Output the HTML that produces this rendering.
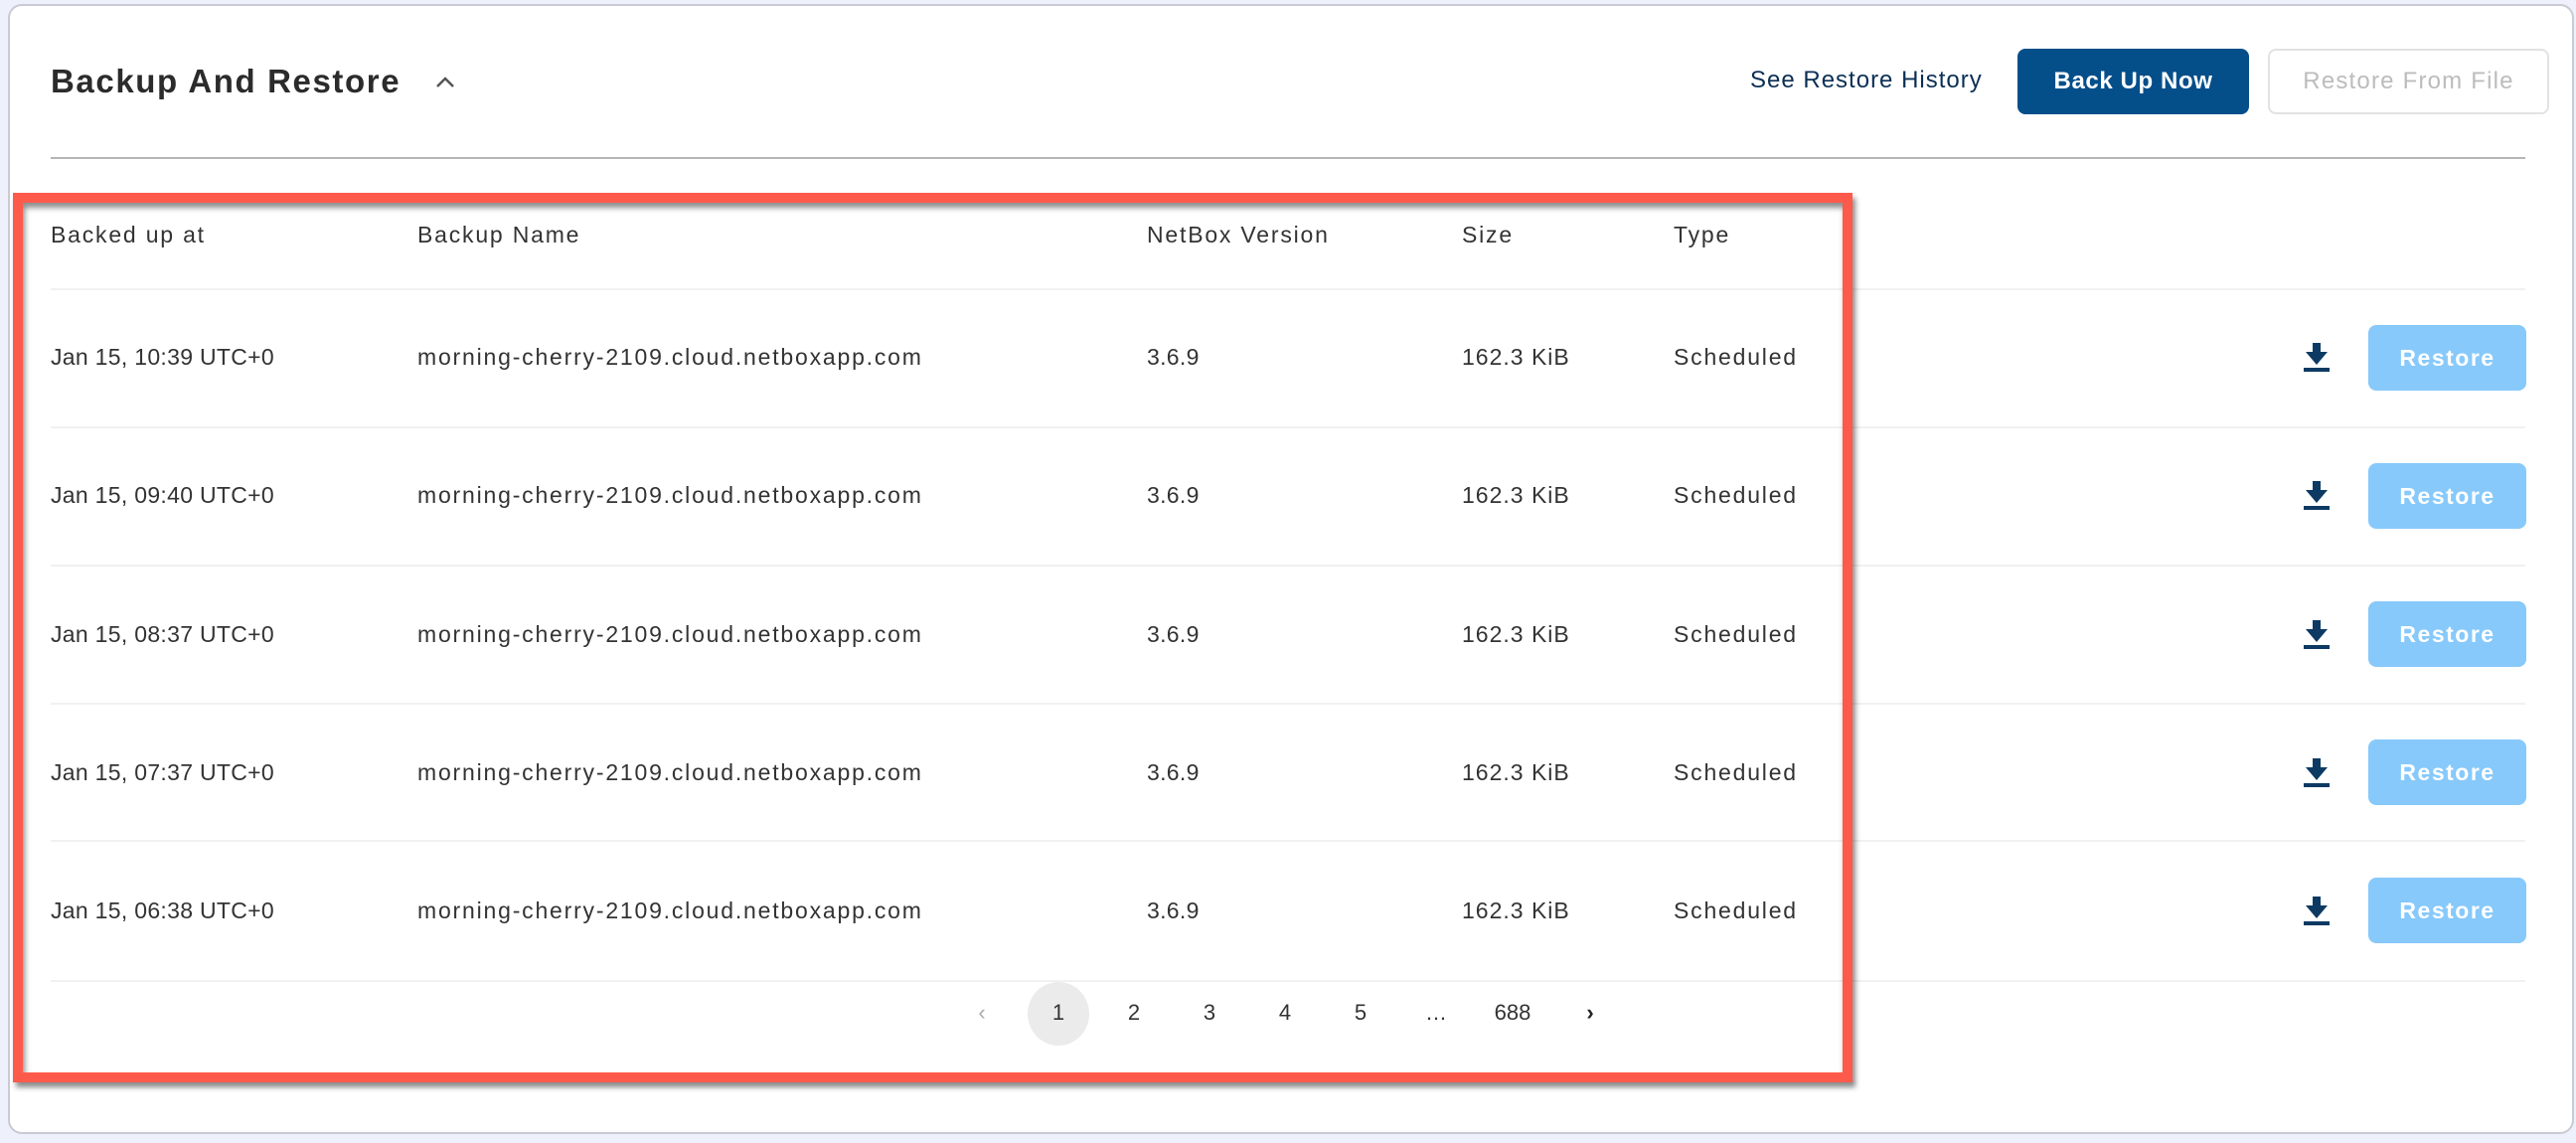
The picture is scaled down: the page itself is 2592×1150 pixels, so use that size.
<!DOCTYPE html>
<html><head><meta charset="utf-8"><style>
*{margin:0;padding:0;box-sizing:border-box}
body{width:2592px;height:1150px;background:#eef1fc;font-family:"Liberation Sans",sans-serif;color:#333;position:relative;overflow:hidden}
.card{position:absolute;left:8px;top:4px;width:2582px;height:1137px;background:#fff;border:2px solid #c9cad3;border-radius:14px}
.a{position:absolute;white-space:nowrap}
.t{font-size:23px;color:#333;line-height:28px;letter-spacing:1.8px}
.d{letter-spacing:0.3px}
.line{position:absolute;left:51px;width:2490px;height:2px;background:#f1f1f1}
.rb{position:absolute;left:2383px;width:159px;height:66px;background:#87c9fb;border-radius:8px;color:#fff;font-size:23px;text-align:center;line-height:66px;letter-spacing:1.5px;font-weight:bold}
.dl{position:absolute;left:2318px;width:26px;height:30px}
.pg{position:absolute;top:1006px;font-size:22px;color:#333;width:60px;text-align:center;line-height:26px}
</style></head><body>
<div class="card"></div>
<div class="a" style="left:51px;top:62px;font-size:33px;font-weight:bold;color:#2b2b2b;letter-spacing:1.6px;line-height:40px">Backup And Restore</div>
<svg class="a" style="left:437px;top:74px" width="22" height="16" viewBox="0 0 22 16"><path d="M3 13 L11 5 L19 13" fill="none" stroke="#555" stroke-width="2.5"/></svg>
<div class="a" style="left:1761px;top:66px;font-size:24px;color:#0b2f55;line-height:30px;letter-spacing:1px">See Restore History</div>
<div class="a" style="left:2030px;top:49px;width:233px;height:66px;background:#044e8a;border-radius:8px;color:#fff;font-size:24px;font-weight:bold;text-align:center;line-height:66px;letter-spacing:0.6px">Back Up Now</div>
<div class="a" style="left:2282px;top:49px;width:283px;height:66px;border:2px solid #e2e2e2;border-radius:8px;color:#bcbcbc;font-size:24px;text-align:center;line-height:62px;letter-spacing:1.2px">Restore From File</div>
<div class="a" style="left:51px;top:158px;width:2490px;height:2px;background:#b5b5b5"></div>

<div class="a t" style="left:51px;top:222px">Backed up at</div>
<div class="a t" style="left:420px;top:222px">Backup Name</div>
<div class="a t" style="left:1154px;top:222px">NetBox Version</div>
<div class="a t" style="left:1471px;top:222px">Size</div>
<div class="a t" style="left:1684px;top:222px">Type</div>

<div class="line" style="top:290px"></div>
<div class="line" style="top:429px"></div>
<div class="line" style="top:568px"></div>
<div class="line" style="top:707px"></div>
<div class="line" style="top:845px"></div>
<div class="line" style="top:986px"></div>

<div class="a t d" style="left:51px;top:345px">Jan 15, 10:39 UTC+0</div>
<div class="a t d" style="left:51px;top:484px">Jan 15, 09:40 UTC+0</div>
<div class="a t d" style="left:51px;top:624px">Jan 15, 08:37 UTC+0</div>
<div class="a t d" style="left:51px;top:763px">Jan 15, 07:37 UTC+0</div>
<div class="a t d" style="left:51px;top:902px">Jan 15, 06:38 UTC+0</div>

<div class="a t" style="left:420px;top:345px">morning-cherry-2109.cloud.netboxapp.com</div>
<div class="a t" style="left:420px;top:484px">morning-cherry-2109.cloud.netboxapp.com</div>
<div class="a t" style="left:420px;top:624px">morning-cherry-2109.cloud.netboxapp.com</div>
<div class="a t" style="left:420px;top:763px">morning-cherry-2109.cloud.netboxapp.com</div>
<div class="a t" style="left:420px;top:902px">morning-cherry-2109.cloud.netboxapp.com</div>

<div class="a t d" style="left:1154px;top:345px">3.6.9</div>
<div class="a t d" style="left:1154px;top:484px">3.6.9</div>
<div class="a t d" style="left:1154px;top:624px">3.6.9</div>
<div class="a t d" style="left:1154px;top:763px">3.6.9</div>
<div class="a t d" style="left:1154px;top:902px">3.6.9</div>

<div class="a t" style="left:1471px;top:345px;letter-spacing:1px">162.3 KiB</div>
<div class="a t" style="left:1471px;top:484px;letter-spacing:1px">162.3 KiB</div>
<div class="a t" style="left:1471px;top:624px;letter-spacing:1px">162.3 KiB</div>
<div class="a t" style="left:1471px;top:763px;letter-spacing:1px">162.3 KiB</div>
<div class="a t" style="left:1471px;top:902px;letter-spacing:1px">162.3 KiB</div>

<div class="a t" style="left:1684px;top:345px">Scheduled</div>
<div class="a t" style="left:1684px;top:484px">Scheduled</div>
<div class="a t" style="left:1684px;top:624px">Scheduled</div>
<div class="a t" style="left:1684px;top:763px">Scheduled</div>
<div class="a t" style="left:1684px;top:902px">Scheduled</div>

<svg class="dl" style="top:345px" viewBox="0 0 26 30"><path d="M9 0h8v9h7L13 22 2 9h7z" fill="#0d3a63"/><rect x="0" y="25" width="26" height="4" fill="#0d3a63"/></svg>
<svg class="dl" style="top:484px" viewBox="0 0 26 30"><path d="M9 0h8v9h7L13 22 2 9h7z" fill="#0d3a63"/><rect x="0" y="25" width="26" height="4" fill="#0d3a63"/></svg>
<svg class="dl" style="top:624px" viewBox="0 0 26 30"><path d="M9 0h8v9h7L13 22 2 9h7z" fill="#0d3a63"/><rect x="0" y="25" width="26" height="4" fill="#0d3a63"/></svg>
<svg class="dl" style="top:763px" viewBox="0 0 26 30"><path d="M9 0h8v9h7L13 22 2 9h7z" fill="#0d3a63"/><rect x="0" y="25" width="26" height="4" fill="#0d3a63"/></svg>
<svg class="dl" style="top:902px" viewBox="0 0 26 30"><path d="M9 0h8v9h7L13 22 2 9h7z" fill="#0d3a63"/><rect x="0" y="25" width="26" height="4" fill="#0d3a63"/></svg>

<div class="rb" style="top:327px">Restore</div>
<div class="rb" style="top:466px">Restore</div>
<div class="rb" style="top:605px">Restore</div>
<div class="rb" style="top:744px">Restore</div>
<div class="rb" style="top:883px">Restore</div>

<div class="a" style="left:1034px;top:988px;width:62px;height:64px;border-radius:50%;background:#ebebeb"></div>
<div class="pg" style="left:958px;color:#aaa">&#8249;</div>
<div class="pg" style="left:1035px">1</div>
<div class="pg" style="left:1111px">2</div>
<div class="pg" style="left:1187px">3</div>
<div class="pg" style="left:1263px">4</div>
<div class="pg" style="left:1339px">5</div>
<div class="pg" style="left:1415px">…</div>
<div class="pg" style="left:1487px;width:70px">688</div>
<div class="pg" style="left:1570px;font-weight:bold;color:#222">&#8250;</div>

<div class="a" style="left:13px;top:194px;width:1851px;height:895px;border:10px solid #fd5a4b;box-shadow:inset 2px 5px 6px rgba(0,0,0,.45),3px 5px 5px rgba(0,0,0,.45)"></div>
</body></html>
